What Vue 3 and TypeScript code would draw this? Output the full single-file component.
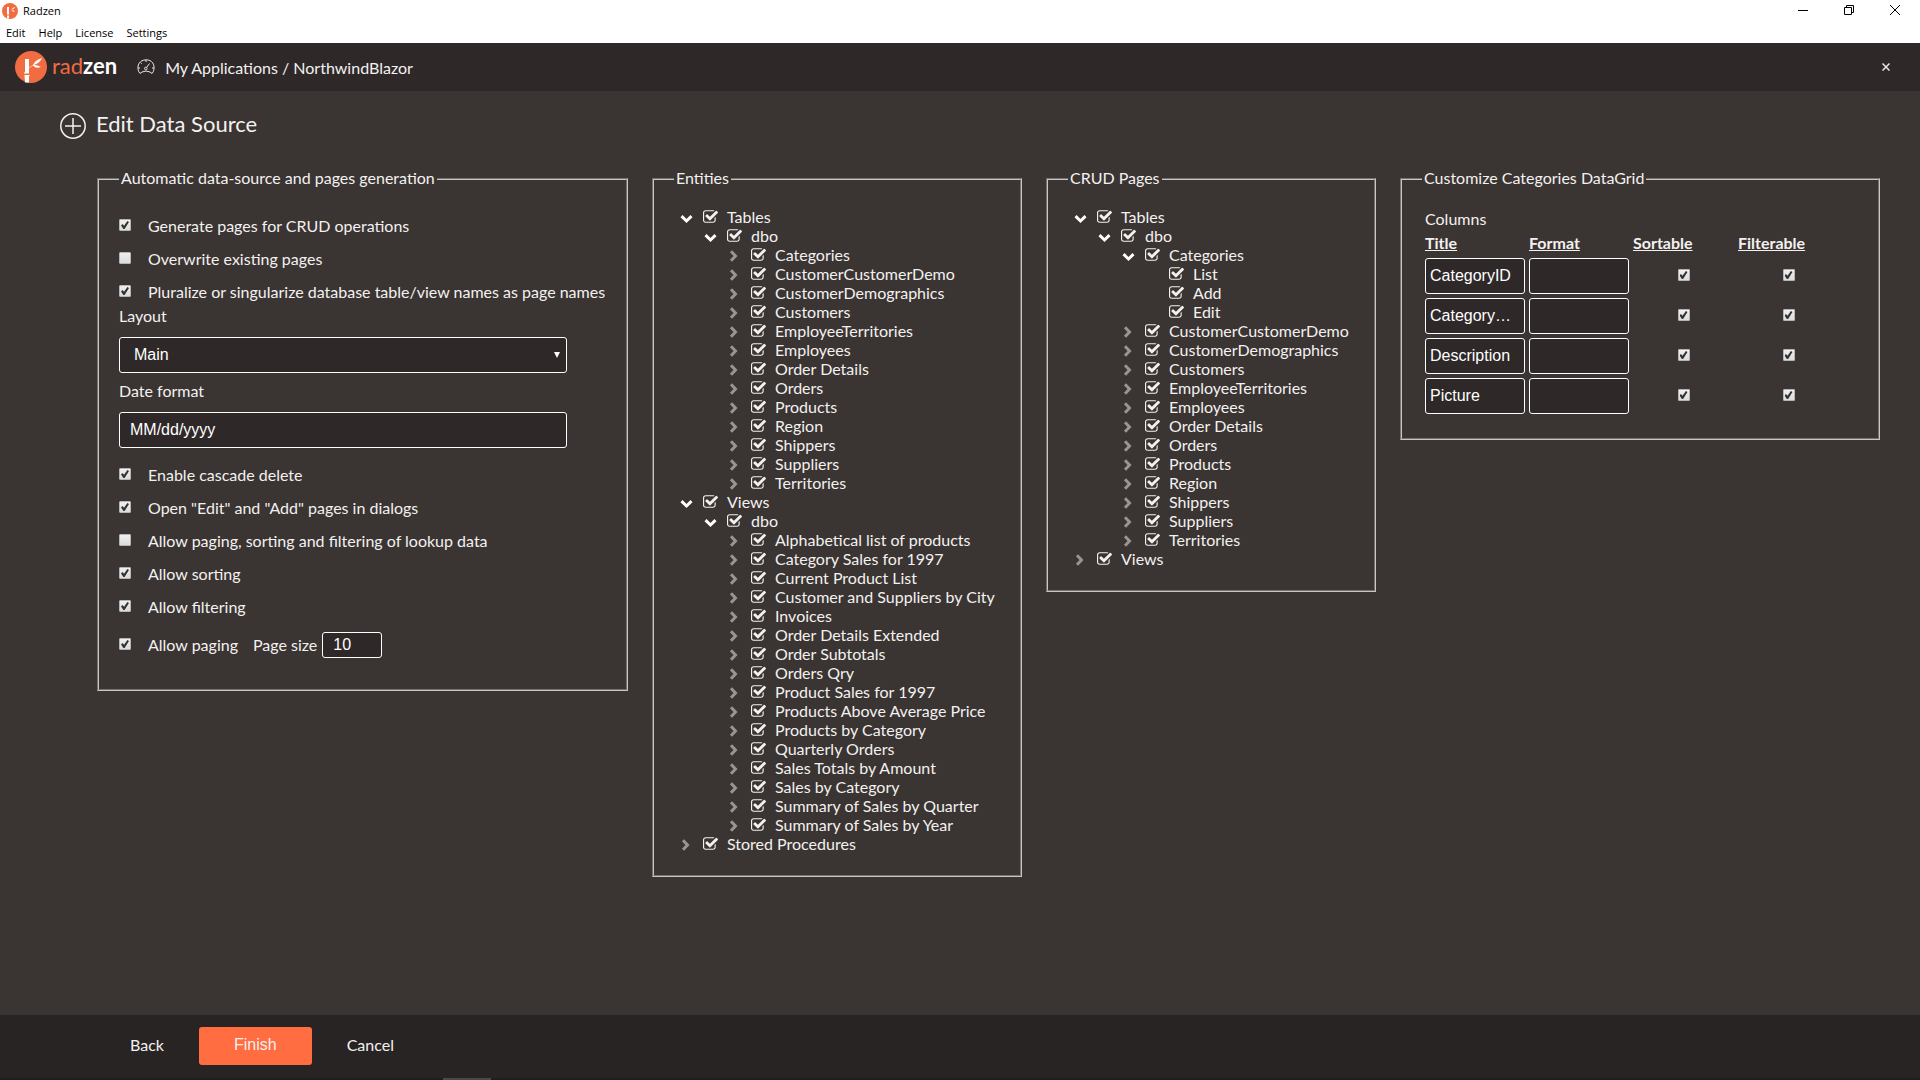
<script setup lang="ts">
import { computed, reactive, ref } from 'vue'

interface TreeNode {
  name: string
  checked: boolean
  open?: boolean
  children?: TreeNode[]
}

interface TreeRow {
  node: TreeNode
  depth: number
  key: string
}

interface CheckOption {
  id: string
  label: string
  checked: boolean
}

interface GridColumn {
  title: string
  format: string
  sortable: boolean
  filterable: boolean
}

const menu = ['Edit', 'Help', 'License', 'Settings']

const tableNames = [
  'Categories', 'CustomerCustomerDemo', 'CustomerDemographics', 'Customers',
  'EmployeeTerritories', 'Employees', 'Order Details', 'Orders', 'Products',
  'Region', 'Shippers', 'Suppliers', 'Territories',
]

const viewNames = [
  'Alphabetical list of products', 'Category Sales for 1997', 'Current Product List',
  'Customer and Suppliers by City', 'Invoices', 'Order Details Extended',
  'Order Subtotals', 'Orders Qry', 'Product Sales for 1997',
  'Products Above Average Price', 'Products by Category', 'Quarterly Orders',
  'Sales Totals by Amount', 'Sales by Category', 'Summary of Sales by Quarter',
  'Summary of Sales by Year',
]

const leaf = (name: string): TreeNode => ({ name, checked: true })
const branch = (name: string, open: boolean, children: TreeNode[] = []): TreeNode =>
  ({ name, checked: true, open, children })

const entities = reactive<TreeNode[]>([
  branch('Tables', true, [branch('dbo', true, tableNames.map((n) => branch(n, false)))]),
  branch('Views', true, [branch('dbo', true, viewNames.map((n) => branch(n, false)))]),
  branch('Stored Procedures', false),
])

const crudPages = reactive<TreeNode[]>([
  branch('Tables', true, [
    branch('dbo', true, tableNames.map((n, i) =>
      branch(n, i === 0, ['List', 'Add', 'Edit'].map(leaf)))),
  ]),
  branch('Views', false),
])

function flatten(nodes: TreeNode[], depth = 0, prefix = ''): TreeRow[] {
  return nodes.flatMap((node) => {
    const key = `${prefix}/${node.name}`
    const row = { node, depth, key }
    return node.open && node.children
      ? [row, ...flatten(node.children, depth + 1, key)]
      : [row]
  })
}

const trees = computed(() => [
  { title: 'Entities', rows: flatten(entities) },
  { title: 'CRUD Pages', rows: flatten(crudPages) },
])

const topOptions = reactive<CheckOption[]>([
  { id: 'crud', label: 'Generate pages for CRUD operations', checked: true },
  { id: 'overwrite', label: 'Overwrite existing pages', checked: false },
  { id: 'pluralize', label: 'Pluralize or singularize database table/view names as page names', checked: true },
])

const gridOptions = reactive<CheckOption[]>([
  { id: 'cascade', label: 'Enable cascade delete', checked: true },
  { id: 'dialogs', label: 'Open "Edit" and "Add" pages in dialogs', checked: true },
  { id: 'lookup', label: 'Allow paging, sorting and filtering of lookup data', checked: false },
  { id: 'sorting', label: 'Allow sorting', checked: true },
  { id: 'filtering', label: 'Allow filtering', checked: true },
])

const layout = ref('Main')
const dateFormat = ref('MM/dd/yyyy')
const paging = ref(true)
const pageSize = ref('10')

const columns = reactive<GridColumn[]>(
  ['CategoryID', 'CategoryName', 'Description', 'Picture'].map((title) =>
    ({ title, format: '', sortable: true, filterable: true })),
)
</script>

<template>
  <div class="app">
    <div class="titlebar">
      <div class="window-title">
        <svg class="app-icon" viewBox="0 0 32 32" aria-hidden="true">
          <circle cx="16" cy="16" r="16" fill="#f26c42" />
          <path d="M10 8h4v15h-4zM10 25h4v6h-4zM18 13.500Q21 9 27 7.500 25 12 18 13.500zM19 15q3-1 7 1-4 3-7-1z" fill="#fff" />
        </svg>
        <span>Radzen</span>
      </div>
      <div class="window-controls">
        <button type="button" aria-label="Minimize">
          <svg viewBox="0 0 10 10"><path d="M0 5.5h10" /></svg>
        </button>
        <button type="button" aria-label="Restore">
          <svg viewBox="0 0 10 10"><path d="M.5 2.5h7v7h-7zM2.5 2.5v-2h7v7h-2" /></svg>
        </button>
        <button type="button" aria-label="Close window">
          <svg viewBox="0 0 10 10"><path d="M0 0l10 10M10 0L0 10" /></svg>
        </button>
      </div>
    </div>
    <nav class="menubar">
      <button v-for="item in menu" :key="item" type="button">{{ item }}</button>
    </nav>

    <header class="header">
      <div class="brand">
        <svg class="brand-mark" viewBox="0 0 32 32" aria-hidden="true">
          <circle cx="16" cy="16" r="16" fill="#f26c42" />
          <path d="M10 8h4v14.500h-5v-1h1zM9.500 24h5v1H14v6.500h-4zM14 16.500l4-2.500Q20 9 27 7q-2 5-8 7 4 0 7 2-5 2-8-1.500l-4 2.500z" fill="#fff" />
        </svg>
        <span class="brand-name"><span class="brand-rad">rad</span>zen</span>
      </div>
      <a class="crumbs" href="#">
        <svg class="gauge" viewBox="0 0 18 16" aria-hidden="true">
          <path d="M3 14.500C-1 10 .5 1 9 .8S19 10 15 14.500L13 13Q9 11 5 13z" />
          <path d="M9.500 8.500L12.500 4.500M9 1v2M3.500 3.500l1.200 1.200M1 9h2M15 9h2" />
          <circle cx="8.800" cy="9.500" r="1.300" />
        </svg>
        <span class="crumb-text">My Applications / NorthwindBlazor</span>
      </a>
      <button class="header-close" type="button" aria-label="Close">
        <svg viewBox="0 0 8 8"><path d="M.5.5l7 7M7.500.5l-7 7" /></svg>
      </button>
    </header>

    <main class="main">
      <h1 class="page-title">
        <svg viewBox="0 0 26 26" aria-hidden="true">
          <circle cx="13" cy="13" r="12.200" />
          <path d="M13 5v16M5 13h16" />
        </svg>
        <span>Edit Data Source</span>
      </h1>

      <div class="panels">
        <fieldset class="panel">
          <legend>Automatic data-source and pages generation</legend>
          <div class="form">
            <label v-for="o in topOptions" :key="o.id" class="option">
              <input v-model="o.checked" class="box" type="checkbox" />
              <span>{{ o.label }}</span>
            </label>
            <label class="field-label" for="layout">Layout</label>
            <div class="select-wrap">
              <select id="layout" v-model="layout" class="field select">
                <option>Main</option>
              </select>
              <svg class="arrow" viewBox="0 0 6 6" aria-hidden="true"><path d="M0 0h6L3 6z" /></svg>
            </div>
            <label class="field-label date-label" for="date-format">Date format</label>
            <input id="date-format" v-model="dateFormat" class="field" type="text" />
            <div class="options">
              <label v-for="o in gridOptions" :key="o.id" class="option">
                <input v-model="o.checked" class="box" type="checkbox" />
                <span>{{ o.label }}</span>
              </label>
            </div>
            <div class="paging">
              <label class="option">
                <input v-model="paging" class="box" type="checkbox" />
                <span>Allow paging</span>
              </label>
              <label for="page-size">Page size</label>
              <input id="page-size" v-model="pageSize" class="field size" type="text" />
            </div>
          </div>
        </fieldset>

        <fieldset v-for="tree in trees" :key="tree.title" class="panel">
          <legend>{{ tree.title }}</legend>
          <ul class="tree">
            <li
              v-for="row in tree.rows"
              :key="row.key"
              class="node"
              :style="{ paddingLeft: row.depth * 24 + 'px' }"
            >
              <button
                v-if="row.node.children"
                type="button"
                class="toggle"
                :class="{ open: row.node.open }"
                :aria-label="(row.node.open ? 'Collapse ' : 'Expand ') + row.node.name"
                @click="row.node.open = !row.node.open"
              >
                <svg v-if="row.node.open" viewBox="0 0 14 14"><path d="M2.500 5.200L7.500 10l5-4.800" /></svg>
                <svg v-else viewBox="0 0 14 14"><path d="M4 2.200L8.500 7 4 11.800" /></svg>
              </button>
              <span v-else class="toggle"></span>
              <label class="node-label">
                <span class="tick">
                  <input v-model="row.node.checked" type="checkbox" />
                  <svg v-if="row.node.checked" viewBox="64 128 1664 1408" aria-hidden="true">
                    <path d="M1472 930v318q0 119-84.500 203.500t-203.500 84.500h-832q-119 0-203.500-84.500t-84.500-203.500v-832q0-119 84.500-203.500t203.500-84.500h832q63 0 117 25 15 7 18 23 3 17-9 29l-49 49q-10 10-23 10-3 0-9-2-23-6-45-6h-832q-66 0-113 47t-47 113v832q0 66 47 113t113 47h832q66 0 113-47t47-113v-254q0-13 9-22l64-64q10-10 23-10 6 0 12 3 20 8 20 29zm231-489l-814 814q-24 24-57 24t-57-24l-430-430q-24-24-24-57t24-57l110-110q24-24 57-24t57 24l263 263 647-647q24-24 57-24t57 24l110 110q24 24 24 57t-24 57z" />
                  </svg>
                </span>
                <span class="node-text">{{ row.node.name }}</span>
              </label>
            </li>
          </ul>
        </fieldset>

        <fieldset class="panel">
          <legend>Customize Categories DataGrid</legend>
          <table class="grid">
            <caption>Columns</caption>
            <thead>
              <tr>
                <th scope="col">Title</th>
                <th scope="col">Format</th>
                <th scope="col">Sortable</th>
                <th scope="col">Filterable</th>
              </tr>
            </thead>
            <tbody>
              <tr v-for="col in columns" :key="col.title">
                <td><input v-model="col.title" class="field cell" type="text" aria-label="Title" /></td>
                <td><input v-model="col.format" class="field cell" type="text" aria-label="Format" /></td>
                <td class="center"><input v-model="col.sortable" class="box" type="checkbox" aria-label="Sortable" /></td>
                <td class="center"><input v-model="col.filterable" class="box" type="checkbox" aria-label="Filterable" /></td>
              </tr>
            </tbody>
          </table>
        </fieldset>
      </div>
    </main>

    <footer class="footer">
      <button type="button" class="action">Back</button>
      <button type="button" class="action primary">Finish</button>
      <button type="button" class="action">Cancel</button>
    </footer>
    <div class="taskbar-edge"><span></span></div>
  </div>
</template>

<style>
body {
  margin: 0;
  background: #3a3432;
}
</style>

<style scoped>
.app {
  display: flex;
  flex-direction: column;
  min-height: 100vh;
  color: #f3f1f0;
  font: 16px/20px Lato, Carlito, sans-serif;
}

button {
  padding: 0;
  border: 0;
  background: none;
  color: inherit;
  font: inherit;
}

.titlebar,
.menubar {
  display: flex;
  background: #fff;
  color: #000;
  font: 11px/20px "Open Sans", "Noto Sans", sans-serif;
}

.titlebar {
  justify-content: space-between;
  height: 22px;
}

.window-title {
  display: flex;
  align-items: center;
  gap: 5px;
  padding-left: 2px;
}

.app-icon {
  width: 16px;
  height: 16px;
}

.window-controls {
  display: flex;
  padding-right: 2px;
}

.window-controls button {
  display: flex;
  align-items: center;
  justify-content: center;
  width: 46px;
  height: 20px;
}

.window-controls svg {
  width: 10px;
  height: 10px;
  overflow: visible;
  fill: none;
  stroke: #000;
}

.menubar {
  gap: 13px;
  height: 21px;
  padding-left: 6px;
}

.header {
  display: flex;
  align-items: center;
  height: 48px;
  padding: 0 30px 0 15px;
  background: #2e2828;
}

.brand {
  display: flex;
  align-items: center;
  gap: 5px;
}

.brand-mark {
  width: 32px;
  height: 32px;
}

.brand-name {
  padding-bottom: 2px;
  color: #fff;
  font-size: 22px;
  font-weight: 700;
}

.brand-rad {
  color: #f26c42;
  font-weight: 400;
}

.crumbs {
  display: flex;
  align-items: center;
  gap: 10px;
  margin-left: 20px;
  color: inherit;
  text-decoration: none;
}

.crumb-text {
  padding-top: 2px;
}

.gauge {
  width: 18px;
  height: 16px;
  fill: none;
  stroke: #e8e6e5;
}

.header-close {
  display: flex;
  margin-left: auto;
}

.header-close svg {
  width: 8px;
  height: 8px;
  fill: none;
  stroke: #e8e6e5;
  stroke-width: 1.5;
}

.main {
  flex: 1;
  padding: 20px 40px 20px 60px;
}

.page-title {
  display: flex;
  align-items: center;
  gap: 10px;
  height: 30px;
  margin: 0 0 28px;
  font-size: 22px;
  font-weight: 400;
  line-height: 26px;
}

.page-title span {
  padding-bottom: 4px;
}

.page-title svg {
  width: 26px;
  height: 26px;
  fill: none;
  stroke: #f3f1f0;
  stroke-width: 1.5;
}

.panels {
  display: grid;
  grid-template-columns: 531fr 370fr 330fr 480fr;
  gap: 24px;
  align-items: start;
  padding-left: 37px;
}

.panel {
  min-width: 0;
  margin: 0;
  padding: 19px 20px 21px;
  border: 2px groove #c8c6c5;
}

.panel legend {
  padding: 0 2px 2px;
  line-height: 18px;
}

.form {
  padding: 8px 0 10px;
}

.option {
  display: flex;
  align-items: center;
  height: 20px;
  margin-bottom: 13px;
}

.box {
  position: relative;
  flex: none;
  box-sizing: border-box;
  appearance: none;
  width: 12px;
  height: 12px;
  margin: 0;
  border: 1px solid #b5b5b5;
  border-radius: 1px;
  background: linear-gradient(#efefef, #dcdcdc);
}

.box:checked::after {
  position: absolute;
  inset: 1px;
  background: #333;
  clip-path: polygon(0 55%, 18% 38%, 38% 60%, 80% 0, 100% 12%, 45% 100%, 30% 100%);
  content: "";
}

.option .box {
  margin: 0 17px 2px 0;
}

.field-label {
  display: block;
  margin: -8px 0 12px;
  line-height: 18px;
}

.field {
  display: block;
  box-sizing: border-box;
  width: 448px;
  max-width: 100%;
  height: 36px;
  padding: 0 10px;
  border: 1px solid #fff;
  border-radius: 3px;
  background: #2e2829;
  color: #fff;
  font: 16px/20px "Liberation Sans", Arial, sans-serif;
}

.select-wrap {
  position: relative;
  width: 448px;
  max-width: 100%;
}

.select {
  appearance: none;
  padding: 0 14px;
}

.arrow {
  position: absolute;
  top: 15px;
  right: 7px;
  width: 6px;
  height: 6px;
  fill: #fff;
  pointer-events: none;
}

.date-label {
  margin-top: 9px;
}

.options {
  margin: 17px 0 15px;
}

.options .option:last-child {
  margin-bottom: 0;
}

.paging {
  display: flex;
  align-items: center;
}

.paging .option {
  margin: 0 15px 0 0;
}

.field.size {
  width: 60px;
  height: 26px;
  margin-left: 5px;
}

.tree {
  margin: 0;
  padding: 0 0 0 5px;
  list-style: none;
  white-space: nowrap;
}

.node {
  display: flex;
  align-items: center;
  height: 19px;
}

.toggle {
  display: flex;
  width: 24px;
  height: 14px;
}

.toggle svg {
  width: 14px;
  height: 14px;
  fill: none;
  stroke: #999594;
  stroke-width: 3;
}

.toggle.open svg {
  stroke: #fff;
}

.node-label {
  display: flex;
  align-items: center;
}

.node-text {
  padding-bottom: 2px;
  line-height: 17px;
}

.tick {
  position: relative;
  width: 24px;
  height: 15px;
}

.tick input {
  display: block;
  box-sizing: border-box;
  appearance: none;
  width: 13px;
  height: 13px;
  margin: 0;
  border: 1px solid #f3f1f0;
  border-radius: 3px;
}

.tick input:checked {
  border-color: transparent;
}

.tick svg {
  position: absolute;
  top: 0;
  left: 0;
  width: 15px;
  height: 13px;
  fill: #f3f1f0;
  pointer-events: none;
}

.grid {
  margin: 1px 0 1px 1px;
  border-collapse: collapse;
}

.grid caption {
  padding: 0 0 4px 2px;
  text-align: left;
}

.grid th {
  height: 20px;
  padding: 0 2px 3px;
  line-height: 19px;
  text-align: left;
  text-decoration: underline;
  vertical-align: top;
}

.grid td {
  width: 100px;
  padding: 2px;
}

.grid td.center {
  width: 101px;
  padding-bottom: 4px;
}

.grid .box {
  display: block;
  margin: 0 auto;
}

.field.cell {
  width: 100px;
  padding: 0 4px;
  text-overflow: ellipsis;
}

.footer {
  display: flex;
  align-items: center;
  box-sizing: border-box;
  height: 63px;
  padding: 0 0 1px 95px;
  background: #282424;
}

.action {
  height: 38px;
  padding: 0 35px 2px;
  border-radius: 3px;
}

.primary {
  background: #ff6d41;
  font-family: "Liberation Sans", Arial, sans-serif;
}

.taskbar-edge {
  height: 2px;
  padding-left: 443px;
  background: #1f1e1e;
}

.taskbar-edge span {
  display: block;
  width: 48px;
  height: 2px;
  background: #4a4848;
}
</style>
